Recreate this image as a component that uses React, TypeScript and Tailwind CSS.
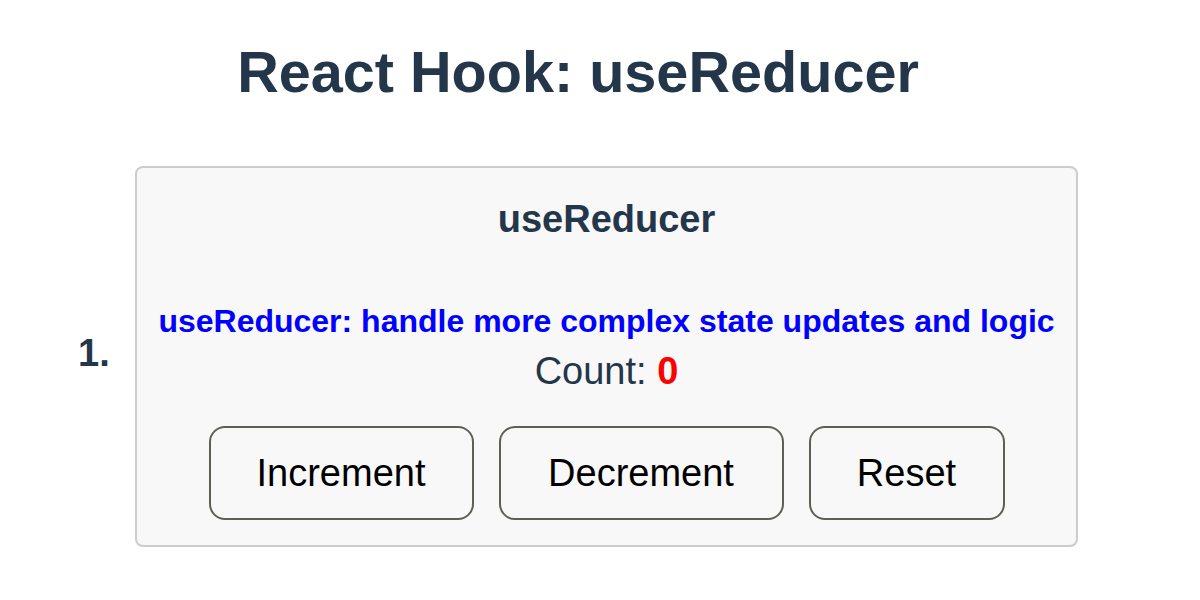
import { useReducer } from 'react';

type Action = { type: 'increment' } | { type: 'decrement' } | { type: 'reset' };

function reducer(state: { count: number }, action: Action) {
  switch (action.type) {
    case 'increment': return { count: state.count + 1 };
    case 'decrement': return { count: state.count - 1 };
    case 'reset':     return { count: 0 };
  }
}

function CounterButton({ label, width, onClick }: { label: string; width: string; onClick: () => void }) {
  return (
    <button
      onClick={onClick}
      className={`${width} h-[94px] border-2 border-[#5f5f55] rounded-[16px] text-[38px] leading-none text-black bg-transparent`}
    >
      {label}
    </button>
  );
}

export default function App() {
  const [state, dispatch] = useReducer(reducer, { count: 0 });

  return (
    <div className="w-[1200px] h-[600px] bg-white text-[#24364a] font-['Liberation_Sans',Arial,sans-serif]">
      <h1 className="pt-[44px] pr-[44px] text-center text-[57.6px] leading-none font-bold">
        React Hook: useReducer
      </h1>

      <div className="flex items-start mt-[64px] pl-[78px]">
        <span className="w-[57px] mt-[168px] text-[38px] leading-none font-bold">1.</span>

        <div className="w-[943px] border-2 border-[#cccccc] rounded-[8px] bg-[#f8f8f8] pt-[32px] pb-[25px] flex flex-col items-center">
          <h3 className="text-[38px] leading-none font-bold">useReducer</h3>
          <p className="mt-[67px] text-[32px] leading-none font-bold text-[#0000ff]">
            useReducer: handle more complex state updates and logic
          </p>
          <p className="mt-[15px] text-[38px] leading-none">
            Count: <span className="font-bold text-[#ff0000]">{state.count}</span>
          </p>
          <div className="mt-[36px] flex gap-[25px]">
            <CounterButton label="Increment" width="w-[265px]" onClick={() => dispatch({ type: 'increment' })} />
            <CounterButton label="Decrement" width="w-[285px]" onClick={() => dispatch({ type: 'decrement' })} />
            <CounterButton label="Reset" width="w-[196px]" onClick={() => dispatch({ type: 'reset' })} />
          </div>
        </div>
      </div>
    </div>
  );
}
